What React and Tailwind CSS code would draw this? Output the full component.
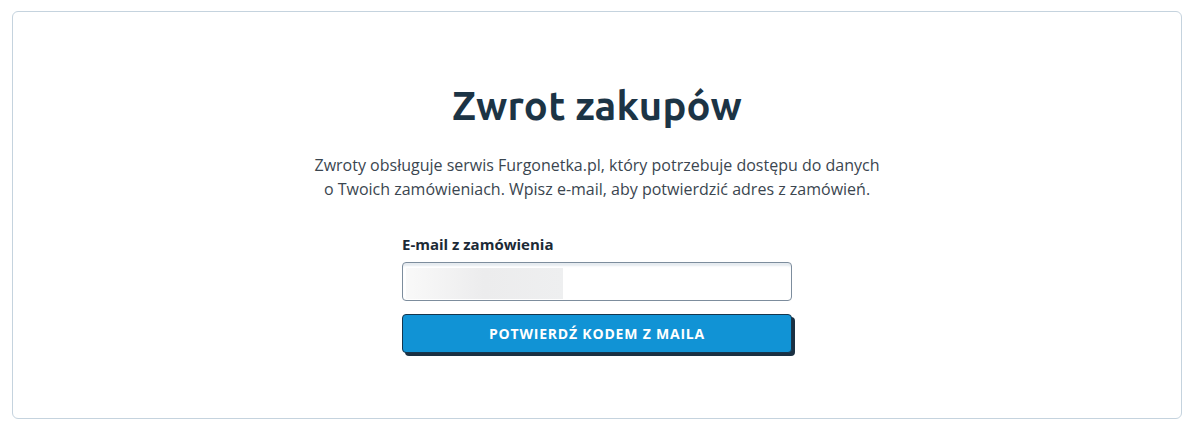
export default function App() {
  return (
    <div className="w-[1195px] h-[431px] bg-white pl-3 pr-[13px] pt-[11px] pb-[12px]" style={{ fontFamily: '"Open Sans", sans-serif' }}>
      <div className="h-full rounded-md border border-[#c5d3de] flex flex-col items-center pt-[70px]">
        <h1 className="text-[40px] leading-[48px] font-bold text-[#1c3445] tracking-[0.2px]" style={{ fontFamily: 'Ubuntu, "Open Sans", sans-serif' }}>
          Zwrot zakupów
        </h1>
        <p className="mt-[23px] text-[16px] leading-[24px] text-[#3b4650] text-center">
          Zwroty obsługuje serwis Furgonetka.pl, który potrzebuje dostępu do danych
          <br />o Twoich zamówieniach. Wpisz e-mail, aby potwierdzić adres z zamówień.
        </p>
        <div className="mt-[33px] w-[390px] flex flex-col">
          <label className="text-[15px] leading-[20px] font-bold text-[#1c2a36]">E-mail z zamówienia</label>
          <div className="mt-[8px] h-[39px] rounded-[4px] border border-[#7d8d9d] bg-white shadow-[inset_0_4px_2px_-1px_#e6ebf0] flex items-center pl-[3px] pt-[3px]">
            <div className="h-[31px] w-[157px] bg-gradient-to-r from-[#f9f9f9] via-[#ececed] to-[#eeeff0]" />
          </div>
          <button className="mt-[13px] h-[39px] rounded-[4px] bg-[#1193d5] border border-[#16364d] shadow-[3px_3px_0_#1b3042] text-white text-[14px] font-bold tracking-[0.8px] uppercase">
            Potwierdź kodem z maila
          </button>
        </div>
      </div>
    </div>
  );
}
